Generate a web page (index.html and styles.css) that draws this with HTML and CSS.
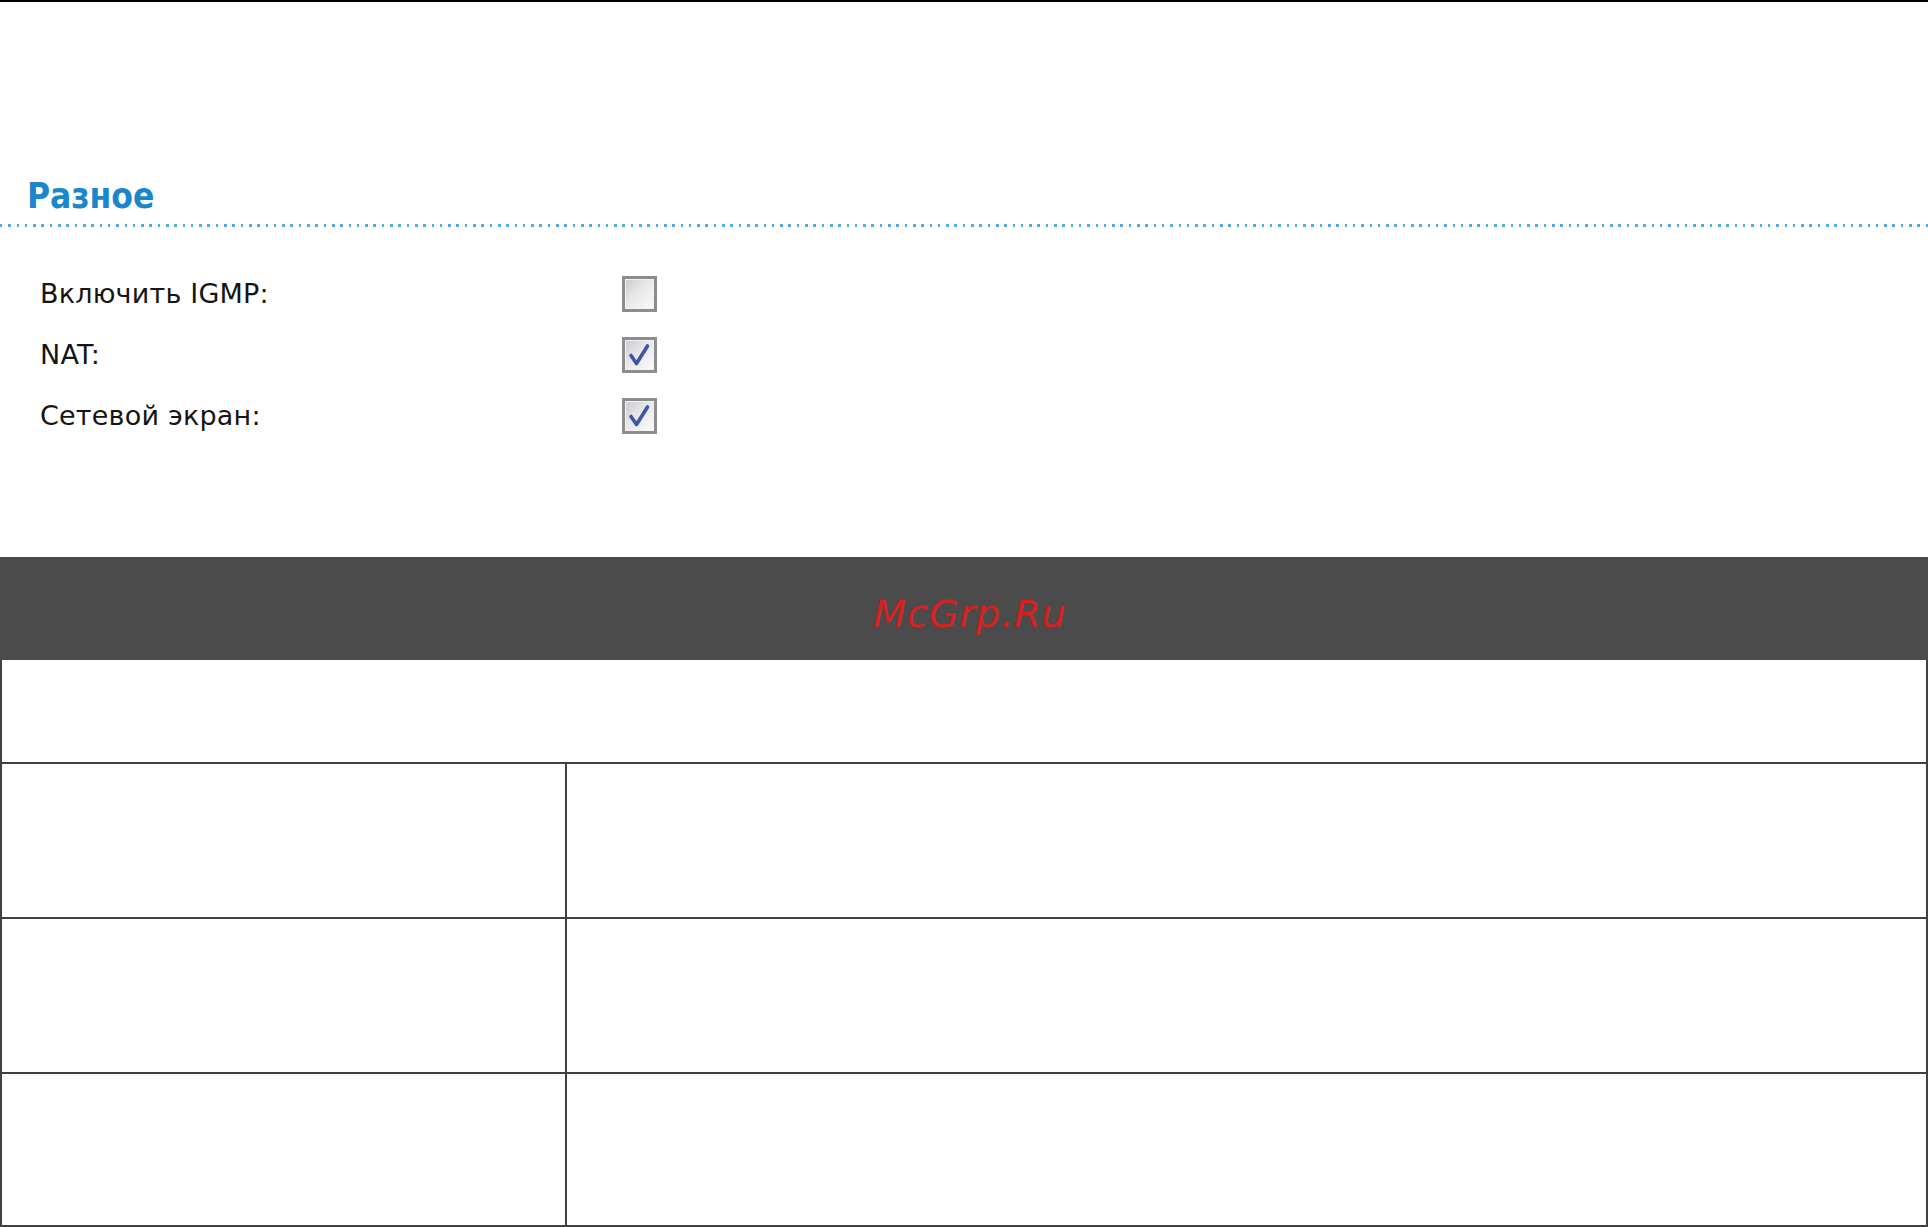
FILE: index.html
```html
<!DOCTYPE html>
<html lang="ru">
<head>
	<meta charset="UTF-8">
	<title>Разное</title>
	<link rel="stylesheet" href="styles.css">
</head>
<body>
<div class="topline"></div>

<h2 class="title">Разное</h2>
<div class="dots"></div>

<div class="form">
	<div class="form_row">
		<span class="label">Включить IGMP:</span>
		<span class="check"></span>
	</div>
	<div class="form_row">
		<span class="label">NAT:</span>
		<span class="check">
			<svg viewBox="0 0 29 29" width="29" height="29"><path d="M6 15.5 L11.5 23.5 L22.5 6" fill="none" stroke="#3f56a6" stroke-width="3.6" stroke-linecap="round" stroke-linejoin="round"/></svg>
		</span>
	</div>
	<div class="form_row">
		<span class="label">Сетевой экран:</span>
		<span class="check">
			<svg viewBox="0 0 29 29" width="29" height="29"><path d="M6 15.5 L11.5 23.5 L22.5 6" fill="none" stroke="#3f56a6" stroke-width="3.6" stroke-linecap="round" stroke-linejoin="round"/></svg>
		</span>
	</div>
</div>

<div class="band"><span class="mark">McGrp.Ru</span></div>

<div class="grid">
	<div class="grid_head"></div>
	<div class="grid_row"><div class="cell_l"></div><div class="cell_r"></div></div>
	<div class="grid_row"><div class="cell_l"></div><div class="cell_r"></div></div>
	<div class="grid_row last"><div class="cell_l"></div><div class="cell_r"></div></div>
</div>
</body>
</html>
```

FILE: styles.css
```css
body { margin: 0; background: #fff; font-family: "DejaVu Sans", Verdana, sans-serif; }

.topline { height: 2px; background: #000; }

.title { margin: 174px 0 0 27px; font: bold 35px/40px "DejaVu Sans Condensed", "DejaVu Sans", sans-serif; font-stretch: condensed; color: #1a86cc; }
.dots { height: 3px; margin-top: 8px; background: repeating-linear-gradient(90deg, #55aade 0 2.5px, transparent 2.5px 8.3px); }

.form { padding: 36px 0 0 40px; }
.form_row { display: grid; grid-template-columns: 582px 35px; align-items: center; height: 61px; }
.label { font-size: 27px; letter-spacing: 0.2px; color: #151515; }
.check { box-sizing: border-box; width: 35px; height: 36px; border: 3px solid #8d8d8d; background: linear-gradient(135deg, #c9c9cf 0%, #e8e8ea 45%, #fbfbfb 100%); box-shadow: inset 0 0 0 1px #f2f2f2; display: flex; align-items: center; justify-content: center; }
.check svg { display: block; }

.band { height: 103px; margin-top: 111px; background: #4b4b4b; display: flex; align-items: center; justify-content: center; }
.mark { padding: 10px 0 0 12px; font: italic 38px "DejaVu Sans", sans-serif; color: #d9201f; letter-spacing: 1px; }

.grid { border: 2px solid #404040; border-top: 0; }
.grid_head { height: 102px; border-bottom: 2px solid #404040; }
.grid_row { display: grid; grid-template-columns: 565px 1fr; height: 153px; border-bottom: 2px solid #404040; }
.grid_row.last { height: 151px; border-bottom: 0; }
.cell_l { border-right: 2px solid #404040; }
```
